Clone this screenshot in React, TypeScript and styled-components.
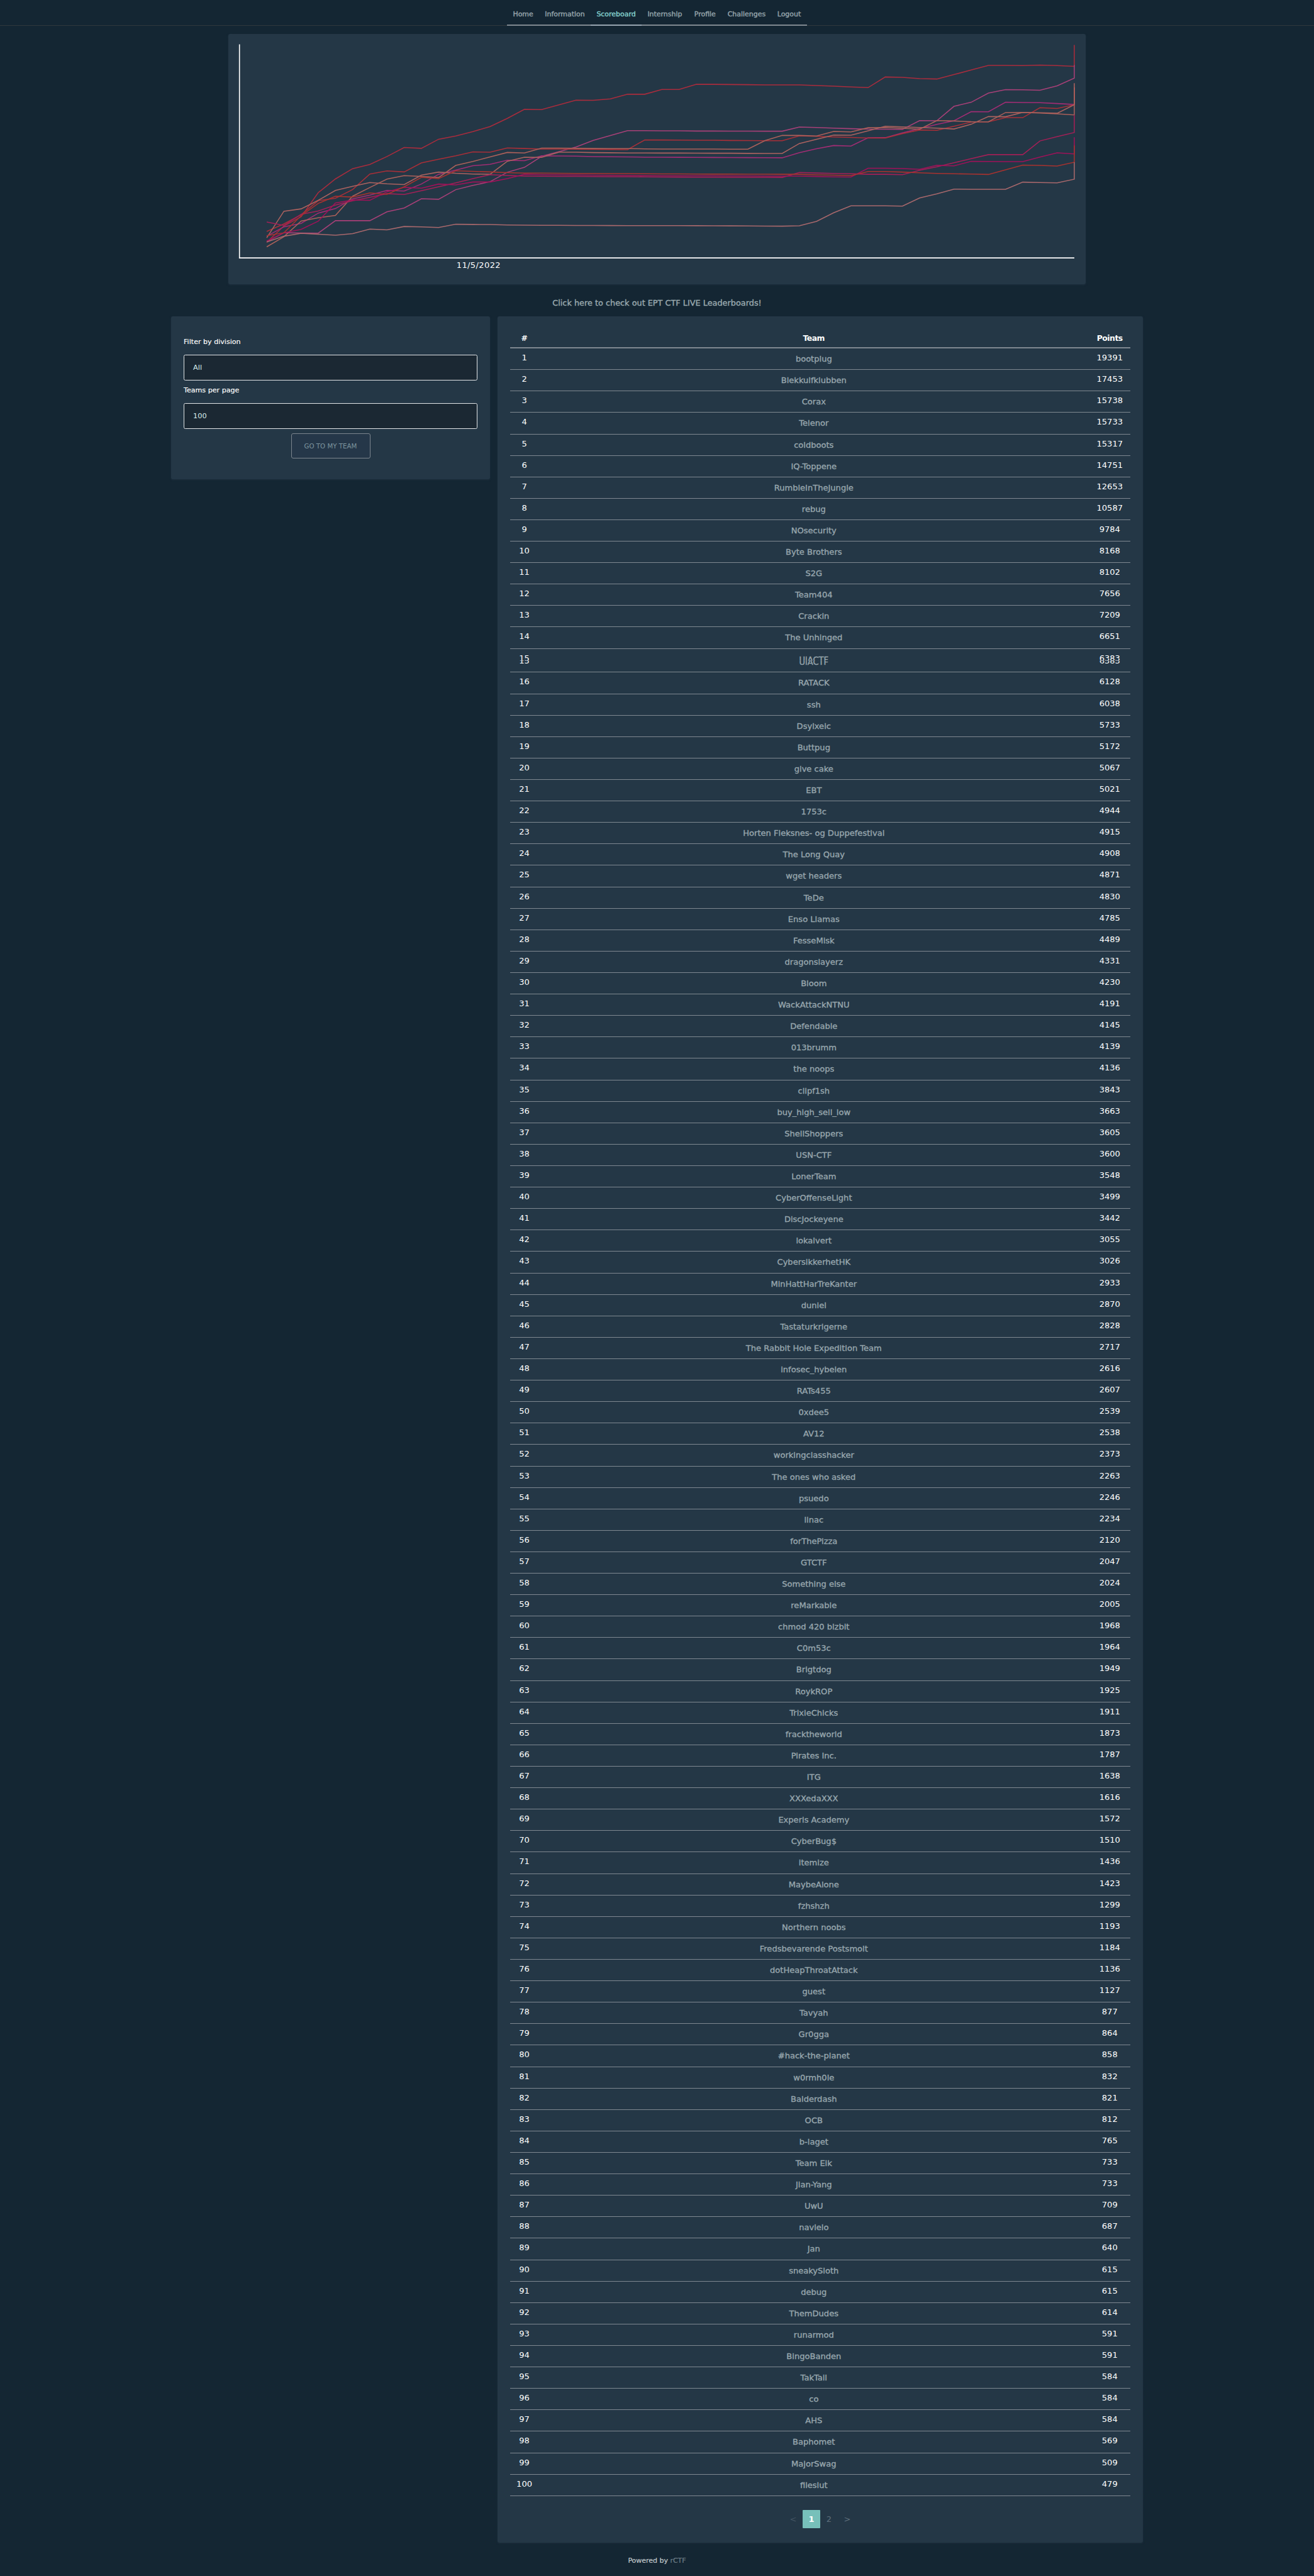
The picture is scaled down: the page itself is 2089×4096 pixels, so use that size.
import React from "react";
import styled, { createGlobalStyle, css } from "styled-components";

const colors = {
  page: "#142633",
  panel: "#243746",
  line: "#7f8891",
  link: "#95a4ab",
  accent: "#77c0ba",
  white: "#ffffff",
};

const GlobalStyle = createGlobalStyle`
  *, *::before, *::after { box-sizing: border-box; }
  html, body { margin: 0; padding: 0; background: ${colors.page}; }
  body {
    color: ${colors.white};
    font-family: "Lucida Sans", "DejaVu Sans", sans-serif;
    font-size: 13.06px;
  }
`;

const Page = styled.div`
  display: flex;
  flex-direction: column;
  align-items: center;
  width: 2089px;
  height: 4096px;
  overflow: hidden;
  background: ${colors.page};
`;

const NavBar = styled.nav`
  display: flex;
  justify-content: center;
  align-self: stretch;
  height: 41px;
  flex: none;
  box-shadow: inset 0 -1px 0 #30383c;
`;

const NavItem = styled.a<{ $width: number; $active?: boolean }>`
  width: ${(p) => p.$width}px;
  height: 41px;
  border-bottom: 2px solid ${(p) => (p.$active ? "#98a5b1" : "#808991")};
  color: ${(p) => (p.$active ? "#84d0cd" : colors.link)};
  font-size: 10.95px;
  line-height: 45px;
  text-align: center;
  white-space: nowrap;
  -webkit-text-stroke: 0.4px currentColor;
`;

const Panel = styled.section`
  background: ${colors.panel};
  border-radius: 3px;
  box-shadow: 0 1px 3px rgba(36, 55, 70, 0.6);
`;

const ChartPanel = styled(Panel)`
  flex: none;
  width: 1362.6px;
  height: 398.4px;
  margin-top: 12.7px;
`;

const Chart = styled.svg`
  display: block;
  width: 100%;
  height: 100%;
`;

const DateLabel = styled.text`
  fill: ${colors.white};
  font-size: 16px;
  letter-spacing: 0.45px;
  text-anchor: middle;
`;

const Announcement = styled.a`
  flex: none;
  height: 51.4px;
  padding-top: 9px;
  color: #9babb0;
  font-size: 12.85px;
  line-height: 41px;
  -webkit-text-stroke: 0.35px currentColor;
`;

const Columns = styled.main`
  display: grid;
  grid-template-columns: 506.3px 1025.3px;
  column-gap: 12.7px;
  align-items: start;
  flex: none;
`;

const FilterPanel = styled(Panel)`
  display: flex;
  flex-direction: column;
  height: 258.6px;
  padding: 32px 19.7px 0;
`;

const FieldLabel = styled.label`
  height: 28.4px;
  font-size: 11.1px;
  line-height: 17px;
  -webkit-text-stroke: 0.15px currentColor;
`;

const SelectBox = styled.div`
  height: 40.8px;
  margin-bottom: 7.8px;
  padding-left: 14px;
  border: 1px solid #e3e6e8;
  border-radius: 2.5px;
  background: #1b2833;
  color: #d8eeee;
  font-size: 11.3px;
  line-height: 39px;
`;

const TeamButton = styled.button`
  align-self: center;
  width: 126px;
  height: 40.6px;
  margin-top: -0.7px;
  padding: 0 0 1px;
  border: 1px solid #7c858e;
  border-radius: 3px;
  background: #253749;
  color: #7d959f;
  font-family: inherit;
  font-size: 10.25px;
  text-align: center;
`;

const BoardPanel = styled(Panel)`
  display: flex;
  flex-direction: column;
  height: 3539.2px;
  padding: 19.6px;
`;

const rowGrid = css`
  display: grid;
  grid-template-columns: 45.2px 1fr 65.6px;
  text-align: center;
`;

const HeadRow = styled.div`
  ${rowGrid}
  height: 31px;
  border-bottom: 2px solid ${colors.line};
  font-size: 12.4px;
  font-weight: 700;
  letter-spacing: -0.5px;
  line-height: 29.5px;
`;

const Row = styled.div<{ $tall?: boolean }>`
  ${rowGrid}
  height: ${(p) => (p.$tall ? 37.87 : 34.112)}px;
  border-bottom: 1px solid ${colors.line};
`;

const NumberCell = styled.span`
  line-height: 29.3px;
`;

const TeamCell = styled.a`
  color: #98a7ae;
  line-height: 33px;
  -webkit-text-stroke: 0.35px currentColor;
`;

/* Text cut at a horizontal seam, its lower half repeated a few pixels down. */
const Seam = styled.span<{ $cut: number; $height: number }>`
  position: relative;
  display: inline-block;
  height: ${(p) => p.$height}px;
  vertical-align: top;
  &::after {
    content: attr(data-label);
    position: absolute;
    left: 0;
    top: 4px;
    clip-path: inset(${(p) => p.$cut - 4}px 0 0 0);
  }
`;

const SeamTop = styled.span<{ $cut: number; $height: number }>`
  display: block;
  clip-path: inset(0 0 ${(p) => p.$height - p.$cut}px 0);
`;

const Pagination = styled.div`
  display: flex;
  align-items: center;
  justify-content: center;
  margin-top: 21.8px;
`;

const PageItem = styled.a<{ $kind: "arrow" | "page" | "current"; $dim?: boolean }>`
  width: ${(p) => (p.$kind === "arrow" ? 30.5 : 27.7)}px;
  height: 29.4px;
  border-radius: 1px;
  background: ${(p) => (p.$kind === "current" ? colors.accent : "transparent")};
  color: ${(p) => (p.$kind === "current" ? colors.white : p.$dim ? "#435462" : "#5d6e7b")};
  font-weight: ${(p) => (p.$kind === "current" ? 700 : 400)};
  line-height: 29px;
  text-align: center;
`;

const Footer = styled.footer`
  margin-top: 18px;
  color: #c3cacd;
  font-size: 10.98px;
  line-height: 21.5px;
  -webkit-text-stroke: 0.2px currentColor;
`;

const FooterLink = styled.a`
  color: #6f7f88;
`;

const nav: [string, number][] = [
  ["Home", 50.5],
  ["Information", 82.4],
  ["Scoreboard", 80.6],
  ["Internship", 74.2],
  ["Profile", 53.6],
  ["Challenges", 78.7],
  ["Logout", 56.4],
];

const CHART_LEFT = 520;
const CHART_STEP = 33.475;

const series: { color: string; y: number[] }[] = [
  { color: "#a92c3d", y: [412,380,362,315,288.3,268.3,260,244.7,227,228.7,211,204.7,196,186.3,170.3,152.7,153.3,144,134.7,135,132.3,123.3,123.3,114,114,104,104,104.3,104.6,105,105,105,106.4,107.5,109,110.4,89.6,90.4,92.9,93.6,85,76,67.1,67.1,67.5,66.4,67.5,69,27.1] },
  { color: "#a84078", y: [410.7,393.3,393.7,394,369.7,369.7,369.7,352.3,345,327,328,309.3,301,293.7,275.3,265.7,244.3,235.3,226,213.3,203.7,194.3,194.3,194.6,194.6,195,195,195.2,195.2,195.3,195.3,187.1,188.2,189.3,190.4,191.3,191.4,191.8,174.6,175,146.8,138.9,121,114.3,114.6,115.4,106.8,91.8,66.4] },
  { color: "#a22d74", y: [400,381.7,375,355,346,327.3,320,310.7,312,298.3,279.3,271.3,262.7,259.7,252,252.7,243.3,243.7,244,244.7,245,245.3,246,246,246.2,246.3,246.5,246.6,246.8,247,247.1,237.1,229.6,223.2,224.3,208.2,207.9,198.6,190.4,182.1,175,157.1,157.5,138.9,139.3,139.6,141.4,143.2,110] },
  { color: "#a82f38", y: [390.7,376,358,330.7,326,309,278.7,272.7,274.7,257,250,243.3,235.7,236.3,228,229,230,230,230.3,230.7,231,231.3,212.3,212.5,212.7,212.9,213,213.4,213.6,213.8,213.9,204.3,205.4,206.4,207.5,208.6,208.6,200,192.9,193.6,185.7,177.5,177.1,168.9,168.9,149.6,151,143.6,110] },
  { color: "#ac625f", y: [403,351.3,346.7,330,310.7,302.7,295.3,297.7,299.3,281,275,277.3,278.7,279.3,254,246,246.3,236.3,236.3,237,237.3,237.7,237.7,237.9,237.9,238,238.2,238.2,238.5,238.6,238.6,219.3,211,202.9,203.2,194.6,185.7,186.8,188.2,189.3,191,181.8,166.8,167.1,158.6,159.3,160.4,143.6,101.8] },
  { color: "#ac605a", y: [420.7,401,370.3,364,359.3,322,305,288.7,282,283.3,285.7,262,254.3,245.3,236.7,237.7,228.3,228.3,228.7,229,229.3,229.3,229.7,230,230,230,230.2,230.3,230.4,213.6,203.6,203.6,204.6,195.7,196.8,188.6,188.2,189.6,191.4,174.6,175.4,176.8,177.1,158.9,158.6,160,161.4,163.6,110] },
  { color: "#a32057", y: [372.3,379,357.3,350.7,339.3,331,324.3,317,318.7,311.3,303.7,296,287.7,280,281.7,282.7,283,283.3,283.3,283.7,284,284,284.3,284.6,284.8,285,285,285.2,285.2,285.3,285.4,275.7,276.8,277.5,278.2,279.3,279.3,280,271.4,264.6,256.8,248.9,241,241,241,214.3,206,197.9,163.6] },
  { color: "#9f1259", y: [409.3,393.3,386.7,370.7,335.3,329.3,330,313.3,304.7,306.3,298.3,300,294.3,294.3,287.7,279.3,280,280.3,280.7,281,281.3,281.7,282,282.1,282.1,282.3,282.3,282.5,282.5,282.7,282.7,282.9,283.6,284.3,284.6,267.5,267.5,268.2,269.6,261.8,262.9,253.9,254.3,254.6,254.6,245.7,237.5,239.6,207] },
  { color: "#a8322f", y: [399,393.3,360,336,322,323.7,315.7,318.3,303.7,285.3,287.7,272.3,273.7,274.7,276,277,277,277.3,277.5,277.7,277.8,278,278.2,278.5,278.6,278.8,279,279,279.1,279.2,279.3,279.3,280.4,281,282,273.9,273.9,275,276.4,277.5,278.2,278.9,279.6,270.4,261.4,262,263.2,255.7,223.2] },
  { color: "#a8686c", y: [411.3,400,394.3,396,398,395,386,387.7,381,381.7,383,376.7,377,377.3,378,378.3,378.7,378.7,379,379,379.2,379.3,379.3,379.3,379.4,379.5,379.6,379.8,380,380.2,380.4,379.6,371,354.3,340.7,340.7,340.7,341.4,325.4,317.5,308.2,308.6,308.6,308.6,294.6,295.4,296,288.9,255.7] },
];

const toPoints = (ys: number[]) =>
  ys
    .map((y, i) => `${(CHART_LEFT + Math.min(i, 47) * CHART_STEP).toFixed(1)},${(y + 60).toFixed(1)}`)
    .join(" ");

const teams: [string, number][] = [
  ["bootplug", 19391], ["Blekkulfklubben", 17453], ["Corax", 15738], ["Telenor", 15733],
  ["coldboots", 15317], ["IQ-Toppene", 14751], ["RumbleInTheJungle", 12653], ["rebug", 10587],
  ["NOsecurity", 9784], ["Byte Brothers", 8168], ["S2G", 8102], ["Team404", 7656],
  ["Crackin", 7209], ["The Unhinged", 6651], ["UiACTF", 6383], ["RATACK", 6128],
  ["ssh", 6038], ["Dsylxeic", 5733], ["Buttpug", 5172], ["give cake", 5067],
  ["EBT", 5021], ["1753c", 4944], ["Horten Fleksnes- og Duppefestival", 4915], ["The Long Quay", 4908],
  ["wget headers", 4871], ["TeDe", 4830], ["Enso Llamas", 4785], ["FesseMisk", 4489],
  ["dragonslayerz", 4331], ["Bloom", 4230], ["WackAttackNTNU", 4191], ["Defendable", 4145],
  ["013brumm", 4139], ["the noops", 4136], ["clipf1sh", 3843], ["buy_high_sell_low", 3663],
  ["ShellShoppers", 3605], ["USN-CTF", 3600], ["LonerTeam", 3548], ["CyberOffenseLight", 3499],
  ["DiscJockeyene", 3442], ["lokalvert", 3055], ["CybersikkerhetHK", 3026], ["MinHattHarTreKanter", 2933],
  ["duniel", 2870], ["Tastaturkrigerne", 2828], ["The Rabbit Hole Expedition Team", 2717], ["infosec_hybelen", 2616],
  ["RATs455", 2607], ["0xdee5", 2539], ["AV12", 2538], ["workingclasshacker", 2373],
  ["The ones who asked", 2263], ["psuedo", 2246], ["linac", 2234], ["forThePizza", 2120],
  ["GTCTF", 2047], ["Something else", 2024], ["reMarkable", 2005], ["chmod 420 blzbit", 1968],
  ["C0m53c", 1964], ["Brigtdog", 1949], ["RoykROP", 1925], ["TrixieChicks", 1911],
  ["fracktheworld", 1873], ["Pirates Inc.", 1787], ["ITG", 1638], ["XXXedaXXX", 1616],
  ["Experis Academy", 1572], ["CyberBug$", 1510], ["itemize", 1436], ["MaybeAlone", 1423],
  ["fzhshzh", 1299], ["Northern noobs", 1193], ["Fredsbevarende Postsmolt", 1184], ["dotHeapThroatAttack", 1136],
  ["guest", 1127], ["Tavyah", 877], ["Gr0gga", 864], ["#hack-the-planet", 858],
  ["w0rmh0le", 832], ["Balderdash", 821], ["OCB", 812], ["b-laget", 765],
  ["Team Eik", 733], ["Jian-Yang", 733], ["UwU", 709], ["navlelo", 687],
  ["Jan", 640], ["sneakySloth", 615], ["debug", 615], ["ThemDudes", 614],
  ["runarmod", 591], ["BingoBanden", 591], ["TakTail", 584], ["co", 584],
  ["AHS", 584], ["Baphomet", 569], ["MajorSwag", 509], ["fileslut", 479],
];

const SEAM_ROW = 15;

function Split({ text, height }: { text: string; height: number }) {
  return (
    <Seam data-label={text} $cut={19} $height={height}>
      <SeamTop $cut={19} $height={height}>{text}</SeamTop>
    </Seam>
  );
}

function TeamRow({ rank, name, points }: { rank: number; name: string; points: number }) {
  const split = rank === SEAM_ROW;
  const show = (text: string, height: number) => (split ? <Split text={text} height={height} /> : text);
  return (
    <Row $tall={split}>
      <NumberCell>{show(String(rank), 29.3)}</NumberCell>
      <TeamCell>{show(name, 33)}</TeamCell>
      <NumberCell>{show(String(points), 29.3)}</NumberCell>
    </Row>
  );
}

export default function App() {
  return (
    <Page>
      <GlobalStyle />
      <NavBar>
        {nav.map(([label, width]) => (
          <NavItem key={label} $width={width} $active={label === "Scoreboard"}>{label}</NavItem>
        ))}
      </NavBar>
      <ChartPanel>
        <Chart viewBox="445.2 65.8 1669.8 488.3" preserveAspectRatio="none">
          {series.map((s) => (
            <polyline key={s.color} points={toPoints(s.y)} fill="none" stroke={s.color} strokeWidth="1.9" />
          ))}
          <path d="M466.9 86V503.4" stroke="#fff" strokeWidth="2" fill="none" />
          <path d="M466 502.4H2093.4" stroke="#fff" strokeWidth="2.2" fill="none" />
          <DateLabel x="932.8" y="521.6">11/5/2022</DateLabel>
        </Chart>
      </ChartPanel>
      <Announcement>Click here to check out EPT CTF LIVE Leaderboards!</Announcement>
      <Columns>
        <FilterPanel>
          <FieldLabel>Filter by division</FieldLabel>
          <SelectBox>All</SelectBox>
          <FieldLabel>Teams per page</FieldLabel>
          <SelectBox>100</SelectBox>
          <TeamButton>GO TO MY TEAM</TeamButton>
        </FilterPanel>
        <BoardPanel>
          <HeadRow>
            <span>#</span>
            <span>Team</span>
            <span>Points</span>
          </HeadRow>
          {teams.map(([name, points], i) => (
            <TeamRow key={name} rank={i + 1} name={name} points={points} />
          ))}
          <Pagination>
            <PageItem $kind="arrow" $dim>&lt;</PageItem>
            <PageItem $kind="current">1</PageItem>
            <PageItem $kind="page">2</PageItem>
            <PageItem $kind="arrow">&gt;</PageItem>
          </Pagination>
        </BoardPanel>
      </Columns>
      <Footer>
        Powered by <FooterLink>rCTF</FooterLink>
      </Footer>
    </Page>
  );
}
